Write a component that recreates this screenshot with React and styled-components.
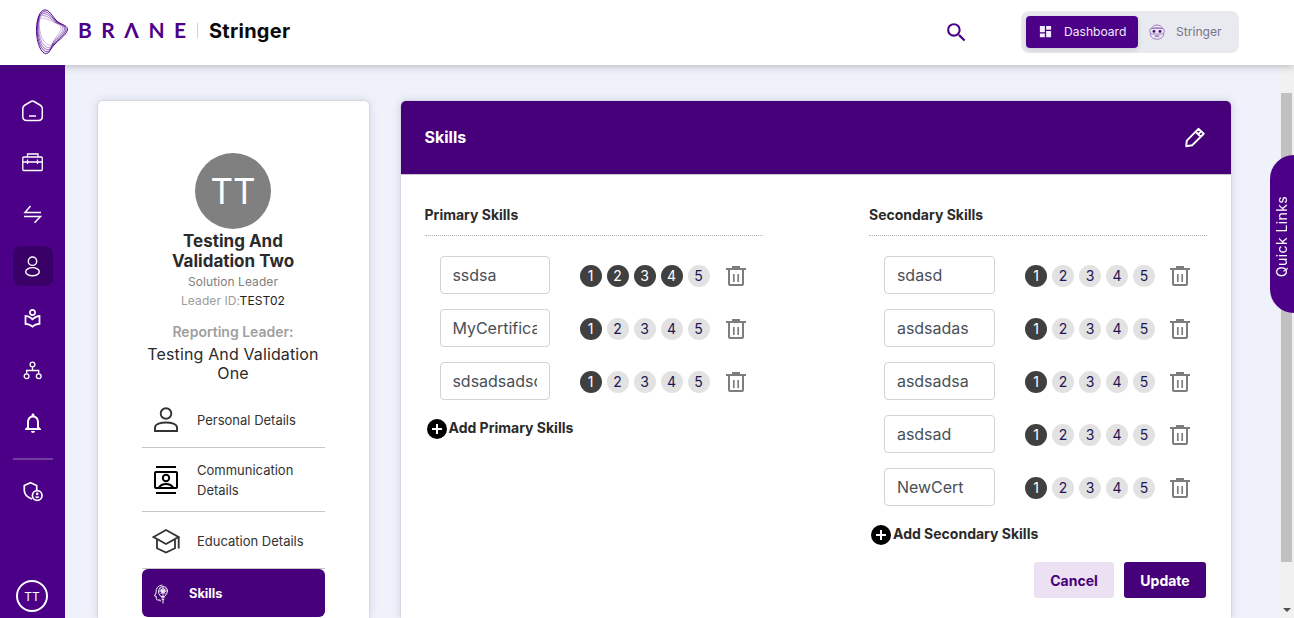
import React from "react";
import styled, { createGlobalStyle, css } from "styled-components";
import {
  MdSearch,
  MdDashboard,
  MdOutlineLocalLibrary,
  MdNotificationsNone,
} from "react-icons/md";

const PURPLE = "#4b0087";
const DEEP = "#460079";

const GlobalStyle = createGlobalStyle`
  * { box-sizing: border-box; }
  html, body { height: 100%; }
  body {
    margin: 0;
    overflow: hidden;
    background: #eff2fb;
    color: #2b2b2b;
    font-family: Inter, "Liberation Sans", sans-serif;
  }
  button, input { font-family: inherit; }
  svg { display: block; flex: none; }
`;

const Page = styled.div`
  height: 100vh;
  display: flex;
  flex-direction: column;
`;

const Header = styled.header`
  position: relative;
  z-index: 2;
  flex: none;
  height: 65px;
  padding: 0 55px 0 35px;
  display: flex;
  align-items: center;
  background: #fff;
  box-shadow: 0 1px 8px rgba(40, 40, 50, 0.3);
`;

const Brand = styled.div`
  display: flex;
  align-items: center;
  height: 65px;
  padding-bottom: 1px;
`;

const BrandName = styled.span`
  width: 119px;
  margin: -4px 0 0 9px;
  color: ${PURPLE};
  font: 700 21px/24px Lato, sans-serif;
  letter-spacing: 9.5px;
  white-space: nowrap;
`;

const BrandRule = styled.span`
  width: 1px;
  height: 15px;
  margin-top: -3px;
  background: #cfcfd4;
`;

const ProductName = styled.span`
  margin: -2px 0 0 11px;
  color: #0a0a0a;
  font-size: 20px;
  font-weight: 700;
  line-height: 26px;
  letter-spacing: 0.25px;
`;

const SearchButton = styled.button`
  margin: 0 0 0 auto;
  padding: 0;
  border: 0;
  background: none;
  color: ${PURPLE};
`;

const ModeSwitch = styled.div`
  display: flex;
  align-items: center;
  width: 218px;
  height: 42px;
  margin: -2px 0 0 52px;
  padding: 5px;
  border-radius: 8px;
  background: #e9eaef;
`;

const Mode = styled.button`
  display: flex;
  align-items: center;
  height: 32px;
  border: 0;
  border-radius: 4px;
  padding: 0 0 0 ${(p) => (p.$active ? 12 : 11)}px;
  gap: 11px;
  width: ${(p) => (p.$active ? 112 : 96)}px;
  font-size: 12.1px;
  color: ${(p) => (p.$active ? "#f3eaff" : "#74758a")};
  background: ${(p) => (p.$active ? PURPLE : "transparent")};
  box-shadow: ${(p) => (p.$active ? "0 2px 5px rgba(0,0,0,.12)" : "none")};
`;

const Body = styled.div`
  flex: 1;
  min-height: 0;
  display: flex;
`;

const Sidebar = styled.nav`
  width: 65px;
  flex: none;
  padding: 25px 1px 6px 0;
  display: flex;
  flex-direction: column;
  align-items: center;
  gap: 12px;
  background: ${PURPLE};
  color: #fff;
`;

const NavItem = styled.a`
  flex: none;
  width: 40px;
  height: 40px;
  margin-left: 1px;
  display: grid;
  place-items: center;
  border-radius: 8px;
  background: ${(p) => (p.$active ? "#390067" : "transparent")};
  svg { margin-top: 1px; }
`;

const NavRule = styled.hr`
  flex: none;
  width: 40px;
  height: 2px;
  margin: 4px 0 -1px 1px;
  border: 0;
  background: #743da2;
`;

const UserBadge = styled.div`
  flex: none;
  width: 32px;
  height: 32px;
  margin-top: auto;
  display: grid;
  place-items: center;
  border: 2px solid #fff;
  border-radius: 50%;
  font-size: 12px;
`;

const Content = styled.main`
  flex: 1;
  min-width: 0;
  padding: 36px 48px 0 33px;
  display: flex;
  align-items: stretch;
  gap: 32px;
  overflow: hidden;
`;

const cardBox = css`
  border-radius: 5px 5px 0 0;
  background: #fff;
  box-shadow: 0 0 10px rgba(50, 50, 70, 0.17), 0 0 1px 1px rgba(0, 0, 0, 0.06);
`;

const ProfileCard = styled.section`
  ${cardBox}
  width: 271px;
  flex: none;
  padding: 52px 45px 0 44px;
  display: flex;
  flex-direction: column;
  align-items: center;
  text-align: center;
`;

const Avatar = styled.div`
  flex: none;
  width: 76px;
  height: 76px;
  display: grid;
  place-items: center;
  border-radius: 50%;
  background: #808080;
  color: #fff;
  font-size: 35px;
  line-height: 76px;
`;

const FullName = styled.h2`
  width: 150px;
  margin: 2px 0 0;
  font-size: 17px;
  font-weight: 700;
  line-height: 20px;
`;

const Role = styled.p`
  margin: ${(p) => p.$top}px 0 0;
  color: ${(p) => p.$color};
  font-size: 12px;
  line-height: 18px;
  letter-spacing: 0.08px;
  b { font-weight: 400; color: #222; }
`;

const ReportLabel = styled.p`
  margin: 12px 0 0;
  color: #9f9f9f;
  font-size: 14px;
  font-weight: 600;
  line-height: 20px;
`;

const ReportName = styled.p`
  width: 190px;
  margin: 3px 0 0;
  font-size: 16px;
  line-height: 19px;
  letter-spacing: 0.13px;
`;

const Menu = styled.div`
  width: 183px;
  margin: 9px -1px 0 0;
  display: flex;
  flex-direction: column;
`;

const MenuItem = styled.a`
  flex: none;
  height: ${(p) => p.$height}px;
  display: flex;
  align-items: center;
  padding: 1px 0 0 10px;
  gap: 17px;
  border-bottom: 1px solid #c6c6c6;
  color: #333;
  font-size: 13px;
  line-height: 20px;
  text-align: left;
`;

const ActiveMenuItem = styled(MenuItem)`
  border: 0;
  border-radius: 6px;
  background: ${DEEP};
  color: #fff;
  font-weight: 700;
  font-size: 12.8px;
`;

const Panel = styled.section`
  ${cardBox}
  flex: 1;
  min-width: 0;
  padding-bottom: 20px;
`;

const PanelHeader = styled.div`
  height: 74px;
  padding: 0 25px 1px 23.5px;
  display: flex;
  align-items: center;
  justify-content: space-between;
  border-bottom: 1px solid #cacaca;
  border-radius: 5px 5px 0 0;
  background: ${DEEP};
  color: #fff;
`;

const PanelTitle = styled.h1`
  margin: 0;
  font-size: 16px;
  font-weight: 700;
`;

const Columns = styled.div`
  display: flex;
  justify-content: space-between;
  padding: 30px 24px 0 23.5px;
`;

const Column = styled.div`
  width: 338px;
`;

const ColumnTitle = styled.h3`
  margin: 0 0 20px;
  padding-bottom: 10px;
  border-bottom: 1px dotted #b4b4b4;
  font-size: 14px;
  font-weight: 700;
  line-height: 20px;
`;

const SkillRow = styled.div`
  display: flex;
  align-items: center;
  height: 38px;
  margin-bottom: 15px;
  padding-left: 15px;
  > svg { margin-top: 1px; }
`;

const SkillInput = styled.input`
  width: ${(p) => p.$width}px;
  height: 38px;
  margin-right: 30px;
  padding: 6px 11.9px;
  border: 1px solid #ced4da;
  border-radius: 4px;
  outline: 0;
  background: #fff;
  color: #495057;
  font-size: 16px;
`;

const Levels = styled.div`
  display: flex;
  gap: 5px;
  margin: 1px ${(p) => p.$gap}px 0 0;
`;

const Level = styled.span`
  width: 22px;
  height: 22px;
  border-radius: 50%;
  text-align: center;
  font-size: 14px;
  line-height: 22px;
  color: ${(p) => (p.$on ? "#fff" : "#1d1754")};
  background: ${(p) => (p.$on ? "#404040" : "#e2e2e2")};
`;

const AddButton = styled.button`
  display: flex;
  align-items: center;
  gap: 2px;
  height: 22px;
  margin: 18px 0 0 2px;
  padding: 0;
  border: 0;
  background: none;
  color: #2b2b2b;
  font-size: 14px;
  font-weight: 700;
  white-space: nowrap;
  span { margin-top: -3px; }
`;

const Actions = styled.div`
  display: flex;
  justify-content: flex-end;
  gap: 10px;
  padding: 16px 25px 0;
`;

const Action = styled.button`
  height: 36px;
  width: ${(p) => p.$width}px;
  padding: 0;
  border: 0;
  border-radius: 3px;
  font-size: 14px;
  font-weight: 700;
  color: ${(p) => (p.$primary ? "#fff" : DEEP)};
  background: ${(p) => (p.$primary ? DEEP : "#ece0f3")};
`;

const ScrollTrack = styled.div`
  width: 15px;
  flex: none;
  padding: 28px 2px 6px;
  display: flex;
  flex-direction: column;
  align-items: center;
  justify-content: space-between;
  background: #f1f1f1;
`;

const ScrollThumb = styled.div`
  width: 11px;
  height: 469px;
  background: #c1c1c1;
`;

const ScrollArrow = styled.div`
  border: 4px solid transparent;
  border-top-color: #505050;
  border-bottom: 0;
`;

const QuickLinks = styled.div`
  position: fixed;
  z-index: 3;
  right: 0;
  top: 155px;
  width: 24px;
  height: 158px;
  display: flex;
  align-items: center;
  justify-content: center;
  border-radius: 0 24px 24px 0;
  writing-mode: vertical-rl;
  transform: rotate(180deg);
  padding-bottom: 5px;
  background: ${PURPLE};
  color: #fff;
  font-size: 14px;
  letter-spacing: 0.4px;
`;

/* Stacked loops of the brand emblem, blended from the outer to the inner contour */
const OUTER = [44,10, 50,9, 52,17, 58,22, 63,25, 68,26, 67.5,30, 66,36, 55,42, 51,49, 49,53, 47,54, 45,53.5, 39,51, 36,38, 36.5,28, 37,18, 40,11, 44,10];
const INNER = [42,18, 46,18, 51,21, 55,23, 58,24, 61,25, 61,29, 60,34, 54,38, 53,42, 52,46, 49,46, 47,44, 42,41, 40,33, 39.5,28, 39,23, 39,18, 42,18];

function loop(t) {
  const v = OUTER.map((n, i) => (n + (INNER[i] - n) * t).toFixed(2));
  return `M${v[0]} ${v[1]}C${v.slice(2).join(" ")}Z`;
}

function Emblem() {
  return (
    <svg width="34" height="46" viewBox="35 9 34 46" fill="none" stroke={PURPLE}>
      {[0, 0.22, 0.45, 0.7, 1].map((t) => (
        <path key={t} d={loop(t)} strokeWidth={0.95 - t * 0.5} opacity={1 - t * 0.4} />
      ))}
    </svg>
  );
}

function Line({ size = 22, box = 22, w = 1.4, children }) {
  return (
    <svg width={size} height={size} viewBox={`0 0 ${box} ${box}`} fill="none" stroke="currentColor" strokeWidth={w}>
      {children}
    </svg>
  );
}

const HomeIcon = () => (
  <Line w={1.5}>
    <path d="M3 5 9 1.500Q10.500.7 12 1.500L18 5Q20.300 6.300 20.300 8.500V16.500q0 4-4 4H4.800q-4 0-4-4V8.500q0-2.200 2.200-3.500Z" />
    <path d="M7 16h7" />
  </Line>
);

const CaseIcon = () => (
  <Line w={1.3}>
    <rect x="0.8" y="5" width="19.5" height="13.5" rx="1" />
    <path d="M5.500 5V2h10.500v3M1 10h19.500M5.500 7.500v4.500M15.500 7.500v4.500" />
  </Line>
);

const SwapIcon = () => (
  <Line w={1.5}>
    <path d="M19 8.500H3L8.500 2M2 12.500h16.500L12.500 18.700" />
  </Line>
);

const UserIcon = () => (
  <Line w={1.4}>
    <circle cx="10.500" cy="5.200" r="4.200" />
    <ellipse cx="10.500" cy="15.700" rx="6.800" ry="4.100" />
  </Line>
);

const TreeIcon = () => (
  <Line w={1.3}>
    <circle cx="10.500" cy="4.500" r="2.400" />
    <circle cx="4.600" cy="16.200" r="2.400" />
    <circle cx="16.700" cy="16.200" r="2.400" />
    <path d="M10.500 7v3.500M4.600 13.800v-3.300h12.100v3.300" />
  </Line>
);

const ShieldUserIcon = () => (
  <Line w={1.7}>
    <path d="M10 18Q2.300 15 2.300 9.500V4.500L8.500 1.700 14.700 4.500v5" />
    <circle cx="15.200" cy="14.500" r="4.800" />
    <circle cx="15.200" cy="12.900" r="1.300" fill="currentColor" stroke="none" />
    <path d="M12.700 16.100q2.500-1.700 5 0-2.500 2.300-5 0Z" fill="currentColor" stroke="none" />
  </Line>
);

const RobotIcon = () => (
  <Line size={16} box={16} w={0.75}>
    <path d="M2 5.200Q3.800 1 8 1t6 4.200M1.400 9.500V11Q2.800 15.200 8 15.200t6.600-4.200V9.500" stroke="#8f5bb5" />
    <rect x="0.700" y="4.300" width="14.600" height="5.700" rx="2.600" stroke="#8f5bb5" />
    <path d="M3.500 4.500Q8 2.800 12.500 4.500" stroke="#8f5bb5" />
    <path d="M5.800 12.100h4.400" stroke={PURPLE} />
    <circle cx="5" cy="7.400" r="1.400" fill={PURPLE} stroke="none" />
    <circle cx="11" cy="7.400" r="1.400" fill={PURPLE} stroke="none" />
  </Line>
);

const PersonIcon = () => (
  <Line size={28} box={28} w={1.9}>
    <circle cx="14" cy="7.500" r="5.300" />
    <path d="M3 25V21.500C3 18 9 16.500 14 16.500S25 18 25 21.500V25Z" />
  </Line>
);

const ContactIcon = () => (
  <svg width="28" height="28" viewBox="0 0 28 28" fill="none" stroke="#000" strokeWidth="2">
    <path d="M4 1h20M4 27h20" />
    <rect x="3" y="6" width="22" height="16" rx="1" />
    <circle cx="14" cy="12" r="3.200" />
    <path d="M6.500 22Q9 18 14 18T21.500 22" />
  </svg>
);

const SchoolIcon = () => (
  <Line size={28} box={28} w={1.8}>
    <path d="M1.500 10 14 3l12.500 7L14 17ZM5 12.200v9L14 25.500l9-4.300v-9M26.700 10V21.500" />
  </Line>
);

const MindIcon = () => (
  <Line size={20} box={20} w={0.95}>
    <path d="M8.200 17.500v-1.500H5.500q-1.200 0-1.200-1.500v-2L2.500 12 4 9Q3.500 1.800 10.500 1" />
    <path d="M8.900 12.500Q6 10 6.500 6.500 7.400 2.500 11 2.500q4.200.2 4.500 4.500-.2 3-2.900 5.500Z" />
    <path d="M11 3v9M7 7h8M8.200 4.500 13.500 10M13.700 4.500 8.500 10M9.200 13.800h3.400M9.600 15.300h2.600M11 15v4.500" />
    <circle cx="11" cy="6.800" r="2" />
  </Line>
);

const PencilIcon = () => (
  <Line size={22} box={22} w={1.9}>
    <path d="M2.200 20.200 2.800 14.600 14.400 2.800l5.400 5L8.200 19.200ZM11.600 5.800l5.200 5M14.300 8.200l2.300-2.300" strokeLinejoin="round" />
  </Line>
);

const TrashIcon = () => (
  <svg width="20" height="22" viewBox="0 0 20 22" fill="none" stroke="#7d7d7d">
    <path d="M0 4h20M6 2h8" strokeWidth="2" />
    <path d="M3 4v15q0 1 1 1h12q1 0 1-1V4" strokeWidth="2" />
    <path d="M7.800 9v8M12.200 9v8" strokeWidth="1.700" />
  </svg>
);

const PlusIcon = () => (
  <svg width="20" height="20" viewBox="0 0 20 20">
    <circle cx="10" cy="10" r="10" fill="#000" />
    <path d="M10 5v10M5 10h10" stroke="#fff" strokeWidth="2" />
  </svg>
);

const NAV = [
  { id: "home", icon: <HomeIcon /> },
  { id: "work", icon: <CaseIcon /> },
  { id: "transfer", icon: <SwapIcon /> },
  { id: "profile", icon: <UserIcon />, active: true },
  { id: "learning", icon: <MdOutlineLocalLibrary size={21} /> },
  { id: "org", icon: <TreeIcon /> },
  { id: "alerts", icon: <MdNotificationsNone size={24} /> },
];

const PRIMARY = [
  { name: "ssdsa", level: 4 },
  { name: "MyCertificate", level: 1 },
  { name: "sdsadsadsdsa", level: 1 },
];

const SECONDARY = ["sdasd", "asdsadas", "asdsadsa", "asdsad", "NewCert"].map((name) => ({ name, level: 1 }));

function SkillColumn({ title, skills, addLabel, inputWidth, iconGap }) {
  return (
    <Column>
      <ColumnTitle>{title}</ColumnTitle>
      {skills.map((s) => (
        <SkillRow key={s.name}>
          <SkillInput $width={inputWidth} defaultValue={s.name} />
          <Levels $gap={iconGap}>
            {[1, 2, 3, 4, 5].map((n) => (
              <Level key={n} $on={n <= s.level}>{n}</Level>
            ))}
          </Levels>
          <TrashIcon />
        </SkillRow>
      ))}
      <AddButton>
        <PlusIcon />
        <span>{addLabel}</span>
      </AddButton>
    </Column>
  );
}

export default function App() {
  return (
    <Page>
      <GlobalStyle />
      <Header>
        <Brand>
          <Emblem />
          <BrandName>BRΛNE</BrandName>
          <BrandRule />
          <ProductName>Stringer</ProductName>
        </Brand>
        <SearchButton aria-label="Search"><MdSearch size={25} /></SearchButton>
        <ModeSwitch>
          <Mode $active><MdDashboard size={15} />Dashboard</Mode>
          <Mode><RobotIcon />Stringer</Mode>
        </ModeSwitch>
      </Header>
      <Body>
        <Sidebar>
          {NAV.map((n) => (
            <NavItem key={n.id} $active={n.active}>{n.icon}</NavItem>
          ))}
          <NavRule />
          <NavItem><ShieldUserIcon /></NavItem>
          <UserBadge>TT</UserBadge>
        </Sidebar>
        <Content>
          <ProfileCard>
            <Avatar>TT</Avatar>
            <FullName>Testing And Validation Two</FullName>
            <Role $top={2} $color="#808080">Solution Leader</Role>
            <Role $top={1} $color="#9c9c9c">Leader ID:<b>TEST02</b></Role>
            <ReportLabel>Reporting Leader:</ReportLabel>
            <ReportName>Testing And Validation One</ReportName>
            <Menu>
              <MenuItem $height={56}><PersonIcon />Personal Details</MenuItem>
              <MenuItem $height={64}><ContactIcon />Communication Details</MenuItem>
              <MenuItem $height={57}><SchoolIcon />Education Details</MenuItem>
              <ActiveMenuItem $height={48}><MindIcon />Skills</ActiveMenuItem>
            </Menu>
          </ProfileCard>
          <Panel>
            <PanelHeader>
              <PanelTitle>Skills</PanelTitle>
              <PencilIcon />
            </PanelHeader>
            <Columns>
              <SkillColumn title="Primary Skills" skills={PRIMARY} addLabel="Add Primary Skills" inputWidth={110} iconGap={16.5} />
              <SkillColumn title="Secondary Skills" skills={SECONDARY} addLabel="Add Secondary Skills" inputWidth={111} iconGap={15} />
            </Columns>
            <Actions>
              <Action $width={80}>Cancel</Action>
              <Action $primary $width={82}>Update</Action>
            </Actions>
          </Panel>
        </Content>
        <ScrollTrack>
          <ScrollThumb />
          <ScrollArrow />
        </ScrollTrack>
      </Body>
      <QuickLinks>Quick Links</QuickLinks>
    </Page>
  );
}
